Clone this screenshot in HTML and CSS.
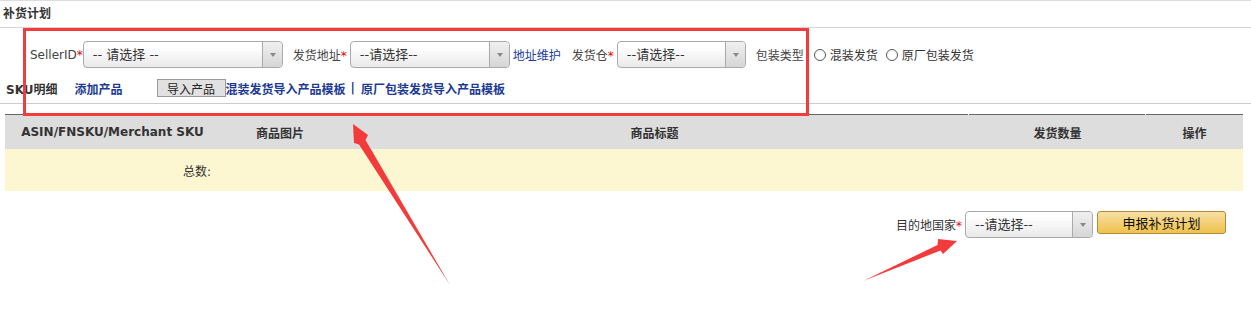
FILE: index.html
```html
<!DOCTYPE html>
<html>
<head>
    <meta charset="UTF-8">
    <title>补货计划</title>
    <link rel="stylesheet" href="styles.css">
</head>
<body>
    <div class="page">
        <div class="page__title">补货计划</div>

        <div class="plan-form">
            <div class="plan-form__row plan-form__row--main">
                <span class="field-label">SellerID<i class="req">*</i></span>
                <div class="chosen chosen--seller"><span>-- 请选择 --</span><b class="chosen__arrow"></b></div>
                <span class="field-label field-label--gap">发货地址<i class="req">*</i></span>
                <div class="chosen chosen--addr"><span>--请选择--</span><b class="chosen__arrow"></b></div>
                <a class="link link--addr" href="#">地址维护</a>
                <span class="field-label field-label--gap">发货仓<i class="req">*</i></span>
                <div class="chosen chosen--store"><span>--请选择--</span><b class="chosen__arrow"></b></div>
                <span class="field-label field-label--pack">包装类型</span>
                <label class="radio"><span class="radio__dot"></span>混装发货</label>
                <label class="radio"><span class="radio__dot"></span>原厂包装发货</label>
            </div>
            <div class="plan-form__row plan-form__row--sku">
                <span class="sku-title">SKU明细</span>
                <a class="link link--bold link--add" href="#">添加产品</a>
                <button class="btn-import">导入产品</button>
                <a class="link link--bold" href="#">混装发货导入产品模板</a>
                <span class="sep">|</span>
                <a class="link link--bold" href="#">原厂包装发货导入产品模板</a>
            </div>
        </div>

        <table class="sku-table">
            <thead>
                <tr>
                    <th class="col-sku">ASIN/FNSKU/Merchant SKU</th>
                    <th class="col-img">商品图片</th>
                    <th class="col-title">商品标题</th>
                    <th class="col-qty">发货数量</th>
                    <th class="col-op">操作</th>
                </tr>
            </thead>
            <tbody>
                <tr class="total-row">
                    <td class="total-label">总数:</td>
                    <td></td>
                    <td></td>
                    <td></td>
                    <td></td>
                </tr>
            </tbody>
        </table>

        <div class="submit-bar">
            <span class="field-label">目的地国家<i class="req">*</i></span>
            <div class="chosen chosen--country"><span>--请选择--</span><b class="chosen__arrow"></b></div>
            <button class="btn-submit">申报补货计划</button>
        </div>
    </div>

    <!-- annotations drawn over the screenshot -->
    <div class="mark-box"></div>
    <svg class="mark-arrows" width="1251" height="314" viewBox="0 0 1251 314">
        <polygon points="353,124 368,135 365.5,140 450,285 359,144.5 354,143" />
        <polygon points="957,241 943,254 940.5,250.5 863,281 937.5,245 938,239" />
    </svg>
</body>
</html>
```

FILE: styles.css
```css
*, *::before, *::after {
    box-sizing: border-box;
}
body {
    margin: 0;
    font-family: "DejaVu Sans", "Noto Sans CJK SC", sans-serif;
    font-size: 12px;
    color: #333;
    background: #fff;
}
.page {
    border-top: 1px solid #ddd;
}
.page__title {
    height: 27px;
    line-height: 26px;
    padding-left: 3px;
    font-weight: bold;
    border-bottom: 1px solid #d4d4d4;
}
.plan-form {
    padding: 13px 0 5px 6px;
    border-bottom: 1px solid #ccc;
}
.plan-form__row {
    display: flex;
    align-items: center;
}
.plan-form__row--main {
    height: 27px;
    margin-left: 24px;
}
.plan-form__row--sku {
    height: 20px;
    margin-top: 10px;
}
.field-label {
    color: #444;
    white-space: nowrap;
}
.field-label--gap {
    margin-left: 10px;
}
.field-label--pack {
    margin-left: 10px;
}
.req {
    font-style: normal;
    color: #e00;
}
.chosen {
    position: relative;
    height: 27px;
    line-height: 25px;
    margin-left: 3px;
    padding-left: 9px;
    border: 1px solid #aaa;
    border-radius: 4px;
    background: linear-gradient(#fff 20%, #f4f4f4 60%, #e9e9e9);
    color: #333;
    font-size: 13px;
    white-space: nowrap;
}
.chosen--seller { width: 200px; margin-left: 0; }
.chosen--addr { width: 160px; }
.chosen--store { width: 129px; }
.chosen--country { width: 128px; }
.chosen__arrow {
    position: absolute;
    top: 0;
    right: 0;
    bottom: 0;
    width: 20px;
    border-left: 1px solid #aaa;
    border-radius: 0 4px 4px 0;
    background: linear-gradient(#f0f0f0, #d6d6d6);
}
.chosen__arrow::after {
    content: "";
    position: absolute;
    left: 7px;
    top: 11px;
    border: 3px solid transparent;
    border-top: 4px solid #888;
}
.link {
    color: #1a3d9a;
    text-decoration: none;
    white-space: nowrap;
}
.link--addr {
    margin: 0 1px 0 3px;
}
.link--bold {
    font-weight: bold;
    color: #1c3a92;
}
.link--add {
    margin-left: 17px;
}
.radio {
    display: flex;
    align-items: center;
    margin-left: 10px;
    color: #333;
    white-space: nowrap;
}
.radio + .radio {
    margin-left: 8px;
}
.radio__dot {
    width: 12px;
    height: 12px;
    margin-right: 4px;
    border: 1px solid #555;
    border-radius: 50%;
    background: #fff;
}
.sku-title {
    font-weight: bold;
    color: #333;
}
.btn-import {
    height: 18px;
    width: 69px;
    margin-left: 34px;
    padding: 0;
    border: 1px solid #999;
    background: #e1e1e1;
    font-family: inherit;
    font-size: 12px;
    color: #222;
}
.sep {
    margin: 0 6px 0 5px;
    font-weight: bold;
    color: #1c3a92;
}
.sku-table {
    width: 1238px;
    margin: 10px 0 0 5px;
    border-collapse: collapse;
    table-layout: fixed;
}
.sku-table th {
    height: 35px;
    padding: 1px 0 0;
    font-weight: bold;
    text-align: center;
    color: #333;
    background: linear-gradient(#666, #666) 0 0 / calc(100% - 1px) 1px no-repeat,
                linear-gradient(#fff, #fff) 0 0 / 100% 1px no-repeat,
                #ddd;
}
.sku-table th:last-child {
    background: linear-gradient(#666, #666) 0 0 / 100% 1px no-repeat, #ddd;
}
.col-sku { width: 215px; }
.col-img { width: 120px; }
.col-title { width: 629px; }
.col-qty { width: 177px; }
.col-op { width: 97px; }
.total-row td {
    height: 42px;
    padding: 0;
    background: #fcf7d1;
}
.sku-table .total-label {
    text-align: right;
    padding-right: 9px;
}
.submit-bar {
    display: flex;
    align-items: center;
    justify-content: flex-end;
    margin: 20px 25px 0 0;
    height: 27px;
}
.submit-bar .field-label {
    color: #333;
}
.btn-submit {
    align-self: flex-start;
    height: 23px;
    width: 129px;
    margin-left: 4px;
    padding: 0;
    border: 1px solid #b18d35;
    border-radius: 3px;
    background: linear-gradient(#f7dfa5, #f0c14b);
    font-family: inherit;
    font-size: 13px;
    color: #111;
}
.mark-box {
    position: absolute;
    left: 23px;
    top: 28px;
    width: 786px;
    height: 88px;
    border: 3px solid #f43b3b;
}
.mark-arrows {
    position: absolute;
    left: 0;
    top: 0;
    fill: #f43b3b;
}
```
